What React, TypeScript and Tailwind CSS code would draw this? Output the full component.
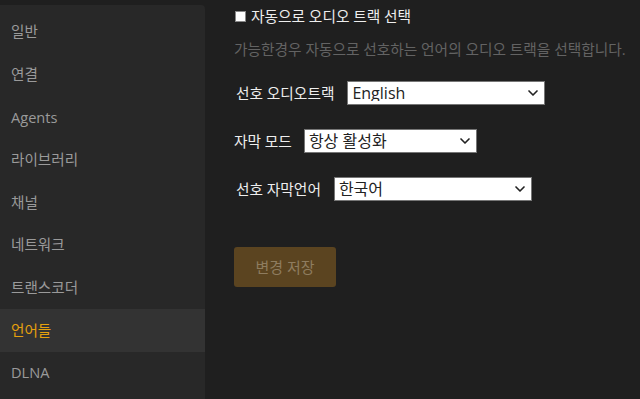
import { ChevronDown } from "lucide-react";

const navItems = ["일반", "연결", "Agents", "라이브러리", "채널", "네트워크", "트랜스코더", "언어들", "DLNA"];

function Select({ value, width, options }: { value: string; width: string; options: string[] }) {
  return (
    <div className={`relative h-[24px] ${width}`}>
      <select
        defaultValue={value}
        className="w-full h-full appearance-none bg-white border border-[#767676] pl-[4px] text-[16px] leading-none text-[#222] outline-none"
      >
        {options.map((o) => (
          <option key={o}>{o}</option>
        ))}
      </select>
      <ChevronDown size={16} strokeWidth={2.5} className="absolute right-[4px] top-[4px] text-[#222] pointer-events-none" />
    </div>
  );
}

export default function App() {
  return (
    <div
      className="flex w-[640px] h-[399px] overflow-hidden bg-[#1f1f1f]"
      style={{ fontFamily: '"Open Sans", "Noto Sans CJK KR", sans-serif' }}
    >
      {/* Sidebar */}
      <nav className="w-[205px] mt-[5px] pt-[6px] bg-[#282828] rounded-tr-[4px] shrink-0">
        {navItems.map((item) => (
          <div
            key={item}
            className={`h-[42.6px] flex items-center pl-[11px] text-[14.6px] ${
              item === "언어들" ? "bg-[#333333] text-[#e5a00d]" : "text-[#9a9a9a]"
            }`}
          >
            {item}
          </div>
        ))}
      </nav>

      {/* Content */}
      <main className="pl-[29px] pt-[4px] text-[14.7px]">
        <label className="flex items-center gap-[5px] h-[24px] text-[#eeeeee]">
          <span className="w-[11px] h-[11px] ml-[1px] bg-white border border-[#888]" />
          자동으로 오디오 트랙 선택
        </label>
        <p className="mt-[9px] text-[#636363] leading-[24px] whitespace-nowrap">
          가능한경우 자동으로 선호하는 언어의 오디오 트랙을 선택합니다.
        </p>

        <div className="mt-[20px] flex flex-col gap-[24px]">
          <div className="flex items-center gap-[13px] h-[24px] text-[#eeeeee]">
            <span className="ml-[2px]">선호 오디오트랙</span>
            <Select value="English" width="w-[198px]" options={["English", "한국어"]} />
          </div>
          <div className="flex items-center gap-[12px] h-[24px] text-[#eeeeee]">
            <span>자막 모드</span>
            <Select value="항상 활성화" width="w-[173px]" options={["항상 활성화", "수동"]} />
          </div>
          <div className="flex items-center gap-[13px] h-[24px] text-[#eeeeee]">
            <span className="ml-[2px]">선호 자막언어</span>
            <Select value="한국어" width="w-[198px]" options={["한국어", "English"]} />
          </div>
        </div>

        <button
          disabled
          className="mt-[46px] w-[102px] h-[40px] rounded-[3px] bg-[#5b4420] text-[#8e7c5f] text-[15px]"
        >
          변경 저장
        </button>
      </main>
    </div>
  );
}
